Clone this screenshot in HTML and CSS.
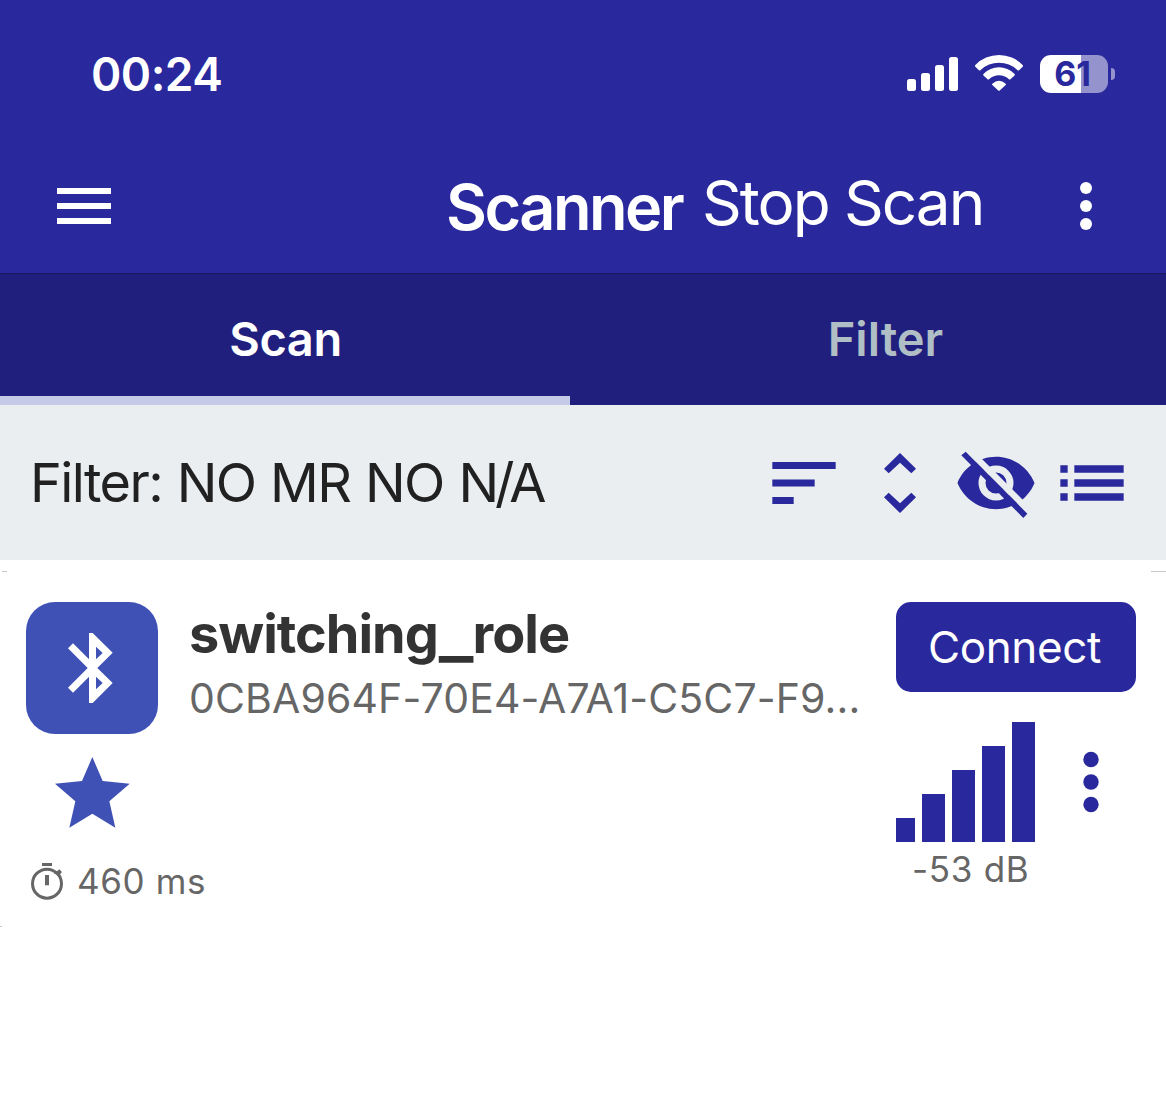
FILE: index.html
```html
<!DOCTYPE html>
<html lang="en">
<head>
<meta charset="utf-8">
<title>Scanner</title>
<link rel="stylesheet" href="styles.css">
</head>
<body>
<header class="header">
  <div class="status">
    <span class="clock">00:24</span>
    <div class="status-icons">
      <svg class="cell" viewBox="0 0 51 36"><rect x="0" y="24" width="9" height="12" rx="2.5"/><rect x="14" y="18" width="9" height="18" rx="2.5"/><rect x="28" y="10" width="9" height="26" rx="2.5"/><rect x="42" y="2" width="9" height="34" rx="2.5"/></svg>
      <svg class="wifi" viewBox="285 75 144 108"><path d="M286 105A99 99 0 0 1 428 105Q430 108 428 110L418 120Q415 123 412 120A80 80 0 0 0 302 120Q299 123 296 120L286 110Q284 108 286 105ZM311 131A65 65 0 0 1 403 131Q406 134 403 137L392 147Q389 150 386 147A44 44 0 0 0 328 147Q325 150 322 147L311 137Q308 134 311 131ZM337 161Q357 143 377 161Q379 163 377 165L360 181Q357 184 354 181L337 165Q335 163 337 161Z"/></svg>
      <div class="battery"><span class="battery-level">61</span><span class="battery-tip"></span></div>
    </div>
  </div>
  <div class="nav">
    <svg class="menu" viewBox="0 0 54 36"><path d="M0 0h54v6H0zM0 15h54v6H0zM0 30h54v6H0z"/></svg>
    <h1 class="title">Scanner</h1>
    <span class="stop">Stop Scan</span>
    <svg class="more" viewBox="0 0 12 48"><circle cx="6" cy="6" r="6"/><circle cx="6" cy="24" r="6"/><circle cx="6" cy="42" r="6"/></svg>
  </div>
</header>
<nav class="tabs">
  <div class="tab tab-active"><span class="tab-scan">Scan</span></div>
  <div class="tab"><span class="tab-filter">Filter</span></div>
</nav>
<section class="filter-bar">
  <span class="filter-text">Filter: NO MR NO <span class="tight">N/A</span></span>
  <div class="tools">
    <svg class="tool" viewBox="18 15 288 288"><path d="M67 96h190v21H67zM67 148.5h127v21H67zM67 201h64v21H67z"/></svg>
    <svg class="tool" viewBox="306 15 288 288"><path d="M450 69L498 116L484 130L450 98L416 130L402 116ZM450 249L498 202L484 188L450 220L416 188L402 202Z"/></svg>
    <svg class="tool" viewBox="594 15 288 288">
      <path fill-rule="evenodd" d="M622.500 159C641 113 686 80.500 738 80.500S835 113 853.500 159C835 205 790 237.500 738 237.500S641 205 622.500 159ZM738 106.500A52.500 52.500 0 1 0 738 211.500A52.500 52.500 0 1 0 738 106.500ZM738 127.500A31.500 31.500 0 1 1 738 190.500A31.500 31.500 0 1 1 738 127.500Z"/>
      <path class="eye-gap" d="M647 66L675 66L860 251L832 251Z"/>
      <path d="M634 76L647 65L832 251L820 264Z"/>
    </svg>
    <svg class="tool" viewBox="882 15 288 288"><path d="M931 106h22v22h-22zM931 148h22v22h-22zM931 190h22v22h-22zM973 106h148v22H973zM973 148h148v22H973zM973 190h148v22H973z"/></svg>
  </div>
</section>
<div class="rule"><span class="rule-left"></span><span class="rule-right"></span></div>
<article class="device">
  <div class="device-left">
    <div class="tile"><svg class="bt" viewBox="202 219 134 210"><path fill-rule="evenodd" d="M265 219H276L336 278L290 324L336 369L276 429H265V350L217 398L202 383L261 324L202 265L217 250L265 298ZM286 260V298L306 279ZM286 350V388L306 369Z"/></svg></div>
    <svg class="star" viewBox="164 591 224 212"><path d="M276 591L307 663L388 671L327 724L345 803L276 761L207 803L225 724L164 671L245 663Z"/></svg>
    <div class="interval">
      <svg class="timer" viewBox="93 909 96 109"><circle cx="141" cy="971" r="43.500" fill="none" stroke="#666" stroke-width="9"/><path d="M126 909h30v9h-30zM135 945h12v31h-12zM161 939L171 934L178 928L186 936L176 948Z"/></svg>
      <span class="interval-text">460 ms</span>
    </div>
  </div>
  <div class="device-main">
    <h2 class="name">switching<span class="underscore">_</span>role</h2>
    <p class="uuid">0CBA964F-70E4-A7A1-C5C7-F9...</p>
  </div>
  <div class="device-right">
    <button class="connect" type="button">Connect</button>
    <div class="signal-row">
      <svg class="signal" viewBox="78 486 417 360"><path d="M78 774h57v72H78zM156 702h69v144h-69zM246 630h69v216h-69zM336 558h69v288h-69zM426 486h69v360h-69z"/></svg>
      <svg class="dots" viewBox="0 0 16 60"><circle cx="8" cy="7.500" r="7.700"/><circle cx="8" cy="30" r="7.700"/><circle cx="8" cy="52.500" r="7.700"/></svg>
    </div>
    <span class="rssi">-53 dB</span>
  </div>
</article>
<div class="rule"><span class="rule-end"></span></div>
</body>
</html>
```
FILE: styles.css
```css
* { box-sizing: border-box; }
body {
  margin: 0;
  height: 1097px;
  overflow: hidden;
  background: #fff;
  font-family: Inter, "Liberation Sans", sans-serif;
}
svg { display: block; flex: none; overflow: visible; }
h1, h2, p { margin: 0; }
span, h1, h2, p { white-space: nowrap; }

.header { height: 274px; background: #29289d; border-bottom: 1px solid #191760; color: #fff; }
.header svg { fill: #fff; }
.status {
  height: 139px;
  padding: 9px 51px 0 91px;
  display: flex;
  align-items: center;
  justify-content: space-between;
}
.clock { font-size: 46px; font-weight: 600; line-height: 56px; letter-spacing: -0.5px; }
.status-icons { display: flex; align-items: flex-start; }
.cell { width: 51px; height: 36px; margin-right: 17px; }
.wifi { width: 48px; height: 36px; margin-right: 17px; }
.battery { display: flex; align-items: center; gap: 3px; }
.battery-level {
  width: 68px;
  height: 38px;
  padding-right: 3px;
  border-radius: 11px;
  background: linear-gradient(to right, #fff 41px, #9593cd 41px);
  color: #29289d;
  font-size: 34px;
  font-weight: 700;
  line-height: 38px;
  text-align: center;
}
.battery-tip { width: 4px; height: 12px; border-radius: 0 4px 4px 0; background: #9593cd; }

.nav { height: 134px; padding: 0 74px 0 57px; display: flex; align-items: center; }
.menu { width: 54px; height: 36px; }
.title { margin: 2px 0 0 335px; width: 256px; font-size: 63px; font-weight: 600; line-height: 76px; letter-spacing: -2.5px; }
.stop { margin-top: -6px; font-size: 62px; line-height: 76px; letter-spacing: -2px; }
.more { width: 12px; height: 48px; margin-left: auto; }

.tabs {
  height: 131px;
  display: grid;
  grid-template-columns: 570px 570px;
  column-gap: 30px;
  overflow: hidden;
  background: #211f7d;
}
.tab {
  padding-top: 8px;
  border-bottom: 9px solid transparent;
  display: flex;
  align-items: center;
  justify-content: center;
  color: #b0bec5;
  font-size: 47px;
  font-weight: 600;
  line-height: 58px;
}
.tab-active { border-color: #c5cae9; color: #fff; }
.tab-scan { padding-left: 1px; letter-spacing: -0.4px; }
.tab-filter { padding-left: 1px; }

.filter-bar {
  height: 155px;
  padding: 0 26px 0 30px;
  display: flex;
  align-items: center;
  justify-content: space-between;
  background: #eaeef1;
}
.filter-text { color: #212121; font-size: 54px; line-height: 64px; letter-spacing: -1.6px; word-spacing: 1px; }
.tight { letter-spacing: -4px; }
.tools { display: flex; padding-top: 1px; }
.tool { width: 96px; height: 96px; fill: #29289d; }
.tool .eye-gap { fill: #eaeef1; }

.rule { height: 12px; display: flex; align-items: flex-end; justify-content: space-between; }
.rule span { height: 1px; background: #c8c7cc; }
.rule-left { width: 5px; margin-left: 2px; }
.rule-right { width: 15px; }
.rule-end { width: 2px; }

.device {
  height: 343px;
  padding: 30px 30px 0 26px;
  display: grid;
  grid-template-columns: 132px 1fr 240px;
}
.device-left { display: flex; flex-direction: column; align-items: center; }
.tile {
  width: 132px;
  height: 132px;
  border-radius: 29px;
  background: #3f51b5;
  display: flex;
  align-items: center;
  justify-content: center;
}
.bt { width: 44.7px; height: 70px; fill: #fff; margin-right: 4px; }
.star { width: 74.7px; height: 70.7px; margin-top: 23px; fill: #3f51b5; }
.interval { align-self: flex-start; margin-top: 31px; padding-left: 5px; display: flex; align-items: center; }
.timer { width: 32px; height: 36.3px; margin-right: 14px; fill: #666; }
.interval-text { color: #666; font-size: 35px; line-height: 44px; letter-spacing: 0.6px; }

.device-main { padding-left: 31px; }
.name { padding-top: 1px; color: #333; font-size: 54px; font-weight: 700; line-height: 62px; letter-spacing: -1px; }
.underscore { display: inline-block; margin: 0 5px; transform: translateY(1px) scale(1.35, 1.1); }
.uuid { margin-top: 4px; color: #666; font-size: 41px; line-height: 58px; letter-spacing: 0.12px; }

.device-right { display: flex; flex-direction: column; }
.connect {
  height: 90px;
  padding: 0 3px 0 0;
  border: 0;
  border-radius: 15px;
  background: #29289d;
  color: #fff;
  font: 400 44px/90px Inter, sans-serif;
  letter-spacing: -0.4px;
}
.signal-row { margin-top: 30px; display: flex; align-items: center; }
.signal { width: 139px; height: 120px; fill: #29289d; }
.dots { width: 16px; height: 60px; margin-left: 48px; fill: #29289d; }
.rssi { padding-left: 16px; margin-top: 5px; color: #666; font-size: 35px; line-height: 44px; letter-spacing: 0.7px; }
```
